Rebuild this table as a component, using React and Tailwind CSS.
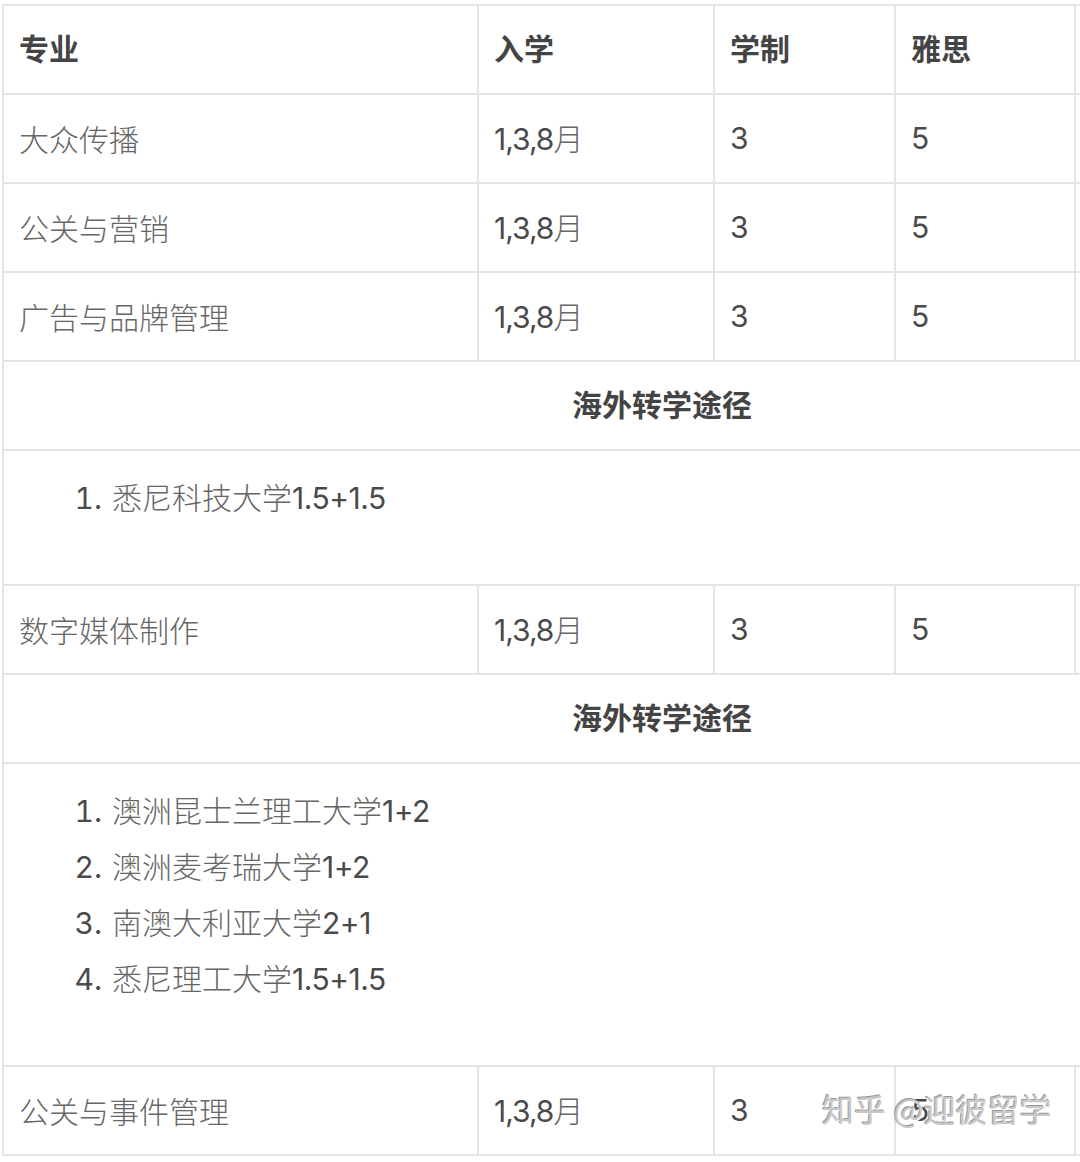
const rows = [
  { type: "data", name: "大众传播" },
  { type: "data", name: "公关与营销" },
  { type: "data", name: "广告与品牌管理" },
  { type: "span" },
  { type: "list", items: [["悉尼科技大学", "1.5+1.5"]] },
  { type: "data", name: "数字媒体制作" },
  { type: "span" },
  {
    type: "list",
    items: [
      ["澳洲昆士兰理工大学", "1+2"],
      ["澳洲麦考瑞大学", "1+2"],
      ["南澳大利亚大学", "2+1"],
      ["悉尼理工大学", "1.5+1.5"],
    ],
  },
  { type: "data", name: "公关与事件管理" },
];

const cell = "border-2 border-[#e4e4e4] px-[15px] align-middle";
const thin = "font-light text-[#666] font-['Noto_Sans_CJK_SC_Light','Noto_Sans_CJK_SC',sans-serif]";

const App = () => {
  return (
    <div className="relative w-[1080px] h-[1162px] overflow-hidden bg-white font-['Inter','Noto_Sans_CJK_SC',sans-serif] text-[30px] text-[#4a4a4a]">
      <div className="pt-[4px] pl-[2px]">
        <table className="table-fixed border-collapse w-[1318px]">
          <colgroup>
            <col className="w-[475px]" />
            <col className="w-[236px]" />
            <col className="w-[181px]" />
            <col className="w-[180px]" />
            <col className="w-[246px]" />
          </colgroup>
          <thead>
            <tr className="h-[89px]">
              {["专业", "入学", "学制", "雅思", ""].map((h, i) => (
                <th key={i} className={`${cell} text-left font-bold text-[#444]`}>{h}</th>
              ))}
            </tr>
          </thead>
          <tbody>
            {rows.map((r, i) => {
              if (r.type === "data") {
                return (
                  <tr key={i} className="h-[89px]">
                    <td className={`${cell} ${thin}`}>{r.name}</td>
                    <td className={cell}>
                      <span className="tracking-[-1px]">1,3,8</span>
                      <span className={thin}>月</span>
                    </td>
                    <td className={cell}>3</td>
                    <td className={cell}>5</td>
                    <td className={cell}></td>
                  </tr>
                );
              }
              if (r.type === "span") {
                return (
                  <tr key={i} className="h-[89px]">
                    <td colSpan={5} className={`${cell} text-center font-bold text-[#444]`}>海外转学途径</td>
                  </tr>
                );
              }
              return (
                <tr key={i}>
                  <td colSpan={5} className={`${cell} align-top pt-[17px] pb-[60px]`}>
                    <ol className="list-decimal list-outside pl-[91px] leading-[56px]">
                      {r.items.map(([cn, num], j) => (
                        <li key={j} className="pl-[2px] h-[56px]">
                          <span className={thin}>{cn}</span>
                          <span className="tracking-[-0.5px]">{num}</span>
                        </li>
                      ))}
                    </ol>
                  </td>
                </tr>
              );
            })}
          </tbody>
        </table>
      </div>
      <div className="absolute left-[822px] top-[1092px] text-[32px] font-['Noto_Sans_CJK_SC',sans-serif] text-[#c8c8c8] [text-shadow:1px_1px_0_#ffffff,-1px_-1px_0_#9a9a9a] leading-none">
        知乎 @迎彼留学
      </div>
    </div>
  );
};

export default App;
